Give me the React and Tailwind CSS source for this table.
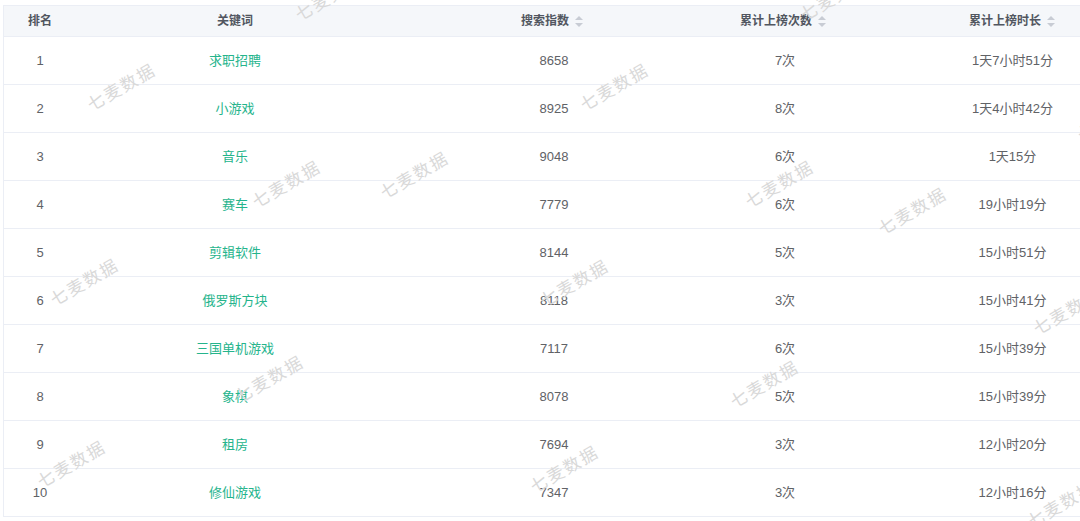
import React from 'react'

const rows = [
    { rank: 1, word: '求职招聘', index: 8658, times: '7次', duration: '1天7小时51分' },
    { rank: 2, word: '小游戏', index: 8925, times: '8次', duration: '1天4小时42分' },
    { rank: 3, word: '音乐', index: 9048, times: '6次', duration: '1天15分' },
    { rank: 4, word: '赛车', index: 7779, times: '6次', duration: '19小时19分' },
    { rank: 5, word: '剪辑软件', index: 8144, times: '5次', duration: '15小时51分' },
    { rank: 6, word: '俄罗斯方块', index: 8118, times: '3次', duration: '15小时41分' },
    { rank: 7, word: '三国单机游戏', index: 7117, times: '6次', duration: '15小时39分' },
    { rank: 8, word: '象棋', index: 8078, times: '5次', duration: '15小时39分' },
    { rank: 9, word: '租房', index: 7694, times: '3次', duration: '12小时20分' },
    { rank: 10, word: '修仙游戏', index: 7347, times: '3次', duration: '12小时16分' },
]

// watermark centres, measured off the page
const marks = [
    [330, -2], [835, -2], [122, 88], [615, 88], [1112, 118], [287, 185], [415, 176],
    [780, 185], [913, 212], [85, 283], [575, 284], [1068, 312], [270, 380],
    [765, 385], [72, 465], [565, 470], [1062, 505],
]

const SortCaret = () => (
    <span className="inline-flex flex-col items-center justify-center w-[20px] h-[20px] gap-[3px]">
        <span className="w-0 h-0 border-x-[4px] border-x-transparent border-b-[4px] border-b-[#c8ccd4]"></span>
        <span className="w-0 h-0 border-x-[4px] border-x-transparent border-t-[4px] border-t-[#c8ccd4]"></span>
    </span>
)

const cols = 'grid grid-cols-[72px_318px_320px_142px_316px]'

const App = () => {
    return (
        <div className="relative w-[1080px] h-[521px] overflow-hidden bg-white" style={{ fontFamily: '"Liberation Sans", "Noto Sans CJK SC", sans-serif' }}>
            <div className="ml-[3px] mt-[5px] w-[1168px] border-l border-t border-[#ebeef5]">
                <div className={`${cols} h-[31px] bg-[#f5f7fa] border-b border-[#ebeef5] text-[12px] font-bold text-[#515660]`}>
                    <div className="flex items-center justify-center">排名</div>
                    <div className="flex items-center justify-center">关键词</div>
                    <div className="flex items-center justify-center pl-[2px]">搜索指数<SortCaret /></div>
                    <div className="flex items-center justify-center pl-[2px]">累计上榜次数<SortCaret /></div>
                    <div className="flex items-center justify-center pl-[2px]">累计上榜时长<SortCaret /></div>
                </div>
                {rows.map(item => (
                    <div key={item.rank} className={`${cols} h-[48px] border-b border-[#ebeef5] text-[13px] text-[#606266]`}>
                        <div className="flex items-center justify-center">{item.rank}</div>
                        <div className="flex items-center justify-center text-[#25b48c]">{item.word}</div>
                        <div className="flex items-center justify-center">{item.index}</div>
                        <div className="flex items-center justify-center">{item.times}</div>
                        <div className="flex items-center justify-center pr-[3px]">{item.duration}</div>
                    </div>
                ))}
            </div>
            {marks.map(([x, y], i) => (
                <div
                    key={i}
                    className="absolute pointer-events-none select-none -translate-x-1/2 -translate-y-1/2 rotate-[-30deg] whitespace-nowrap text-[17px] tracking-[2px] text-[#d9d9d9]"
                    style={{ left: x, top: y }}
                >
                    七麦数据
                </div>
            ))}
        </div>
    )
}

export default App
